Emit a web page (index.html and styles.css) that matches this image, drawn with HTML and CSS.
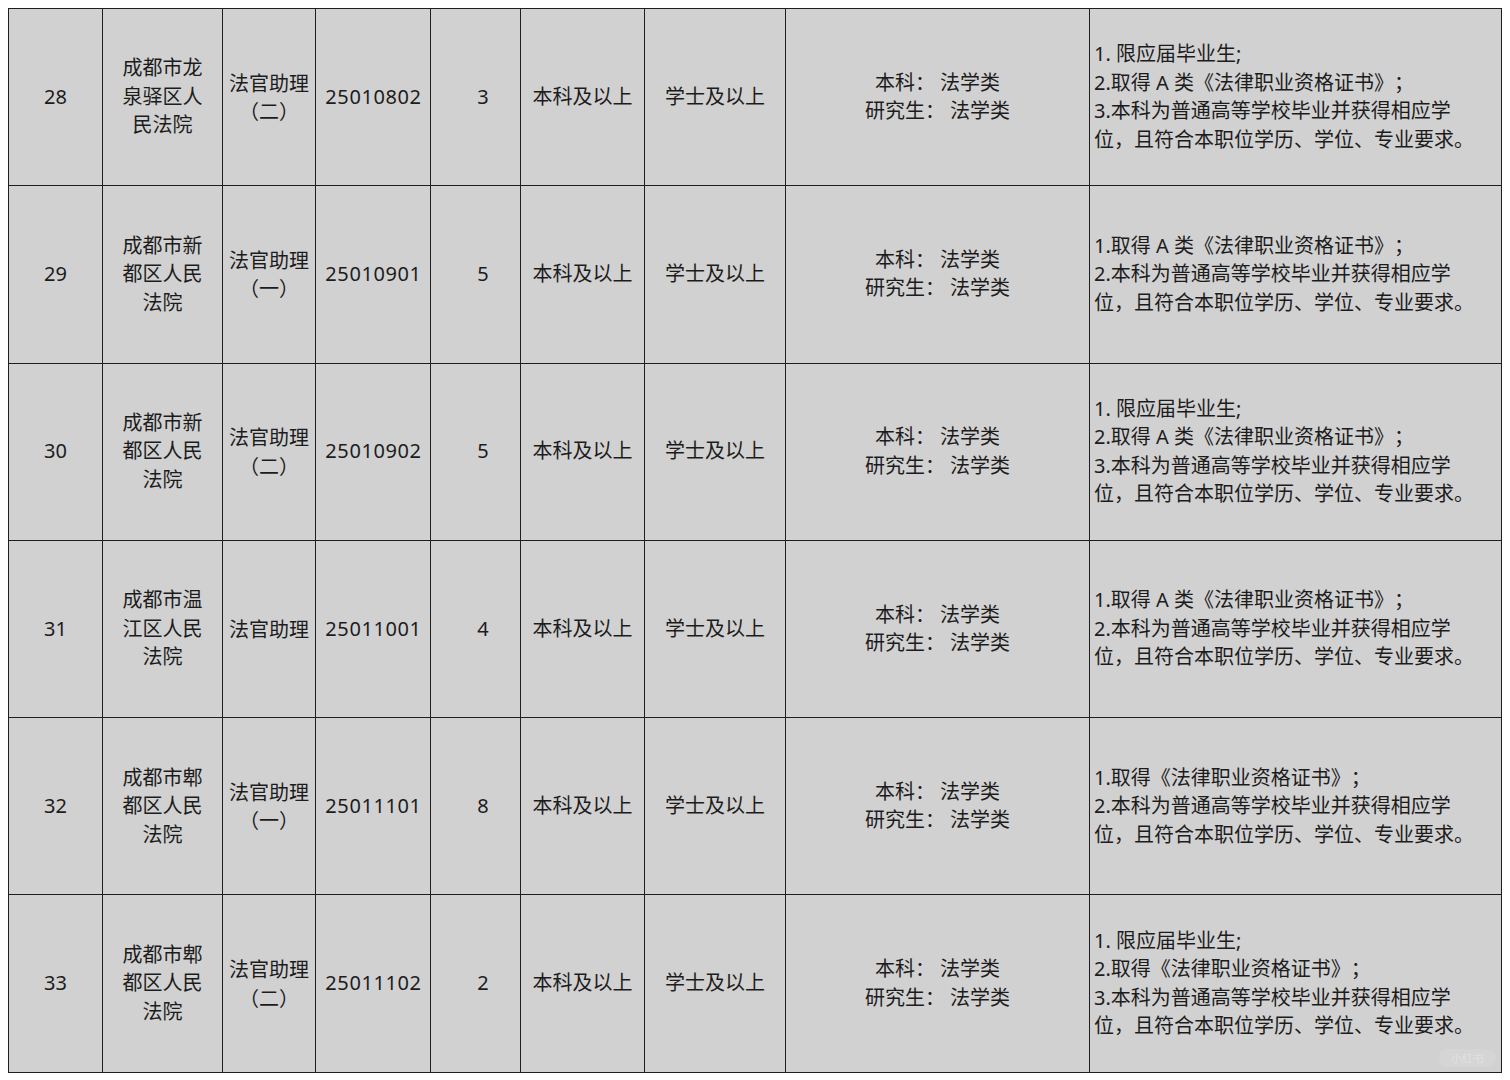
FILE: index.html
```html
<!DOCTYPE html>
<html lang="zh-CN">
<head>
<meta charset="utf-8">
<title>法官助理职位表</title>
<link rel="stylesheet" href="styles.css">
</head>
<body>
<div class="sheet">
<table class="grid">
  <colgroup>
    <col class="c-no"><col class="c-org"><col class="c-pos"><col class="c-code"><col class="c-num"><col class="c-edu"><col class="c-deg"><col class="c-major"><col class="c-req">
  </colgroup>
  <tbody>
    <tr>
      <td>28</td>
      <td>成都市龙<br>泉驿区人<br>民法院</td>
      <td class="pos">法官助理<br>（二）</td>
      <td class="code">25010802</td>
      <td class="num">3</td>
      <td>本科及以上</td>
      <td>学士及以上</td>
      <td>本科： 法学类<br>研究生： 法学类</td>
      <td class="req">1. 限应届毕业生;<br>2.取得 A 类《法律职业资格证书》；<br>3.本科为普通高等学校毕业并获得相应学<br>位，且符合本职位学历、学位、专业要求。</td>
    </tr>
    <tr>
      <td>29</td>
      <td>成都市新<br>都区人民<br>法院</td>
      <td class="pos">法官助理<br>（一）</td>
      <td class="code">25010901</td>
      <td class="num">5</td>
      <td>本科及以上</td>
      <td>学士及以上</td>
      <td>本科： 法学类<br>研究生： 法学类</td>
      <td class="req">1.取得 A 类《法律职业资格证书》；<br>2.本科为普通高等学校毕业并获得相应学<br>位，且符合本职位学历、学位、专业要求。</td>
    </tr>
    <tr>
      <td>30</td>
      <td>成都市新<br>都区人民<br>法院</td>
      <td class="pos">法官助理<br>（二）</td>
      <td class="code">25010902</td>
      <td class="num">5</td>
      <td>本科及以上</td>
      <td>学士及以上</td>
      <td>本科： 法学类<br>研究生： 法学类</td>
      <td class="req">1. 限应届毕业生;<br>2.取得 A 类《法律职业资格证书》；<br>3.本科为普通高等学校毕业并获得相应学<br>位，且符合本职位学历、学位、专业要求。</td>
    </tr>
    <tr>
      <td>31</td>
      <td>成都市温<br>江区人民<br>法院</td>
      <td class="pos">法官助理</td>
      <td class="code">25011001</td>
      <td class="num">4</td>
      <td>本科及以上</td>
      <td>学士及以上</td>
      <td>本科： 法学类<br>研究生： 法学类</td>
      <td class="req">1.取得 A 类《法律职业资格证书》；<br>2.本科为普通高等学校毕业并获得相应学<br>位，且符合本职位学历、学位、专业要求。</td>
    </tr>
    <tr>
      <td>32</td>
      <td>成都市郫<br>都区人民<br>法院</td>
      <td class="pos">法官助理<br>（一）</td>
      <td class="code">25011101</td>
      <td class="num">8</td>
      <td>本科及以上</td>
      <td>学士及以上</td>
      <td>本科： 法学类<br>研究生： 法学类</td>
      <td class="req">1.取得《法律职业资格证书》；<br>2.本科为普通高等学校毕业并获得相应学<br>位，且符合本职位学历、学位、专业要求。</td>
    </tr>
    <tr>
      <td>33</td>
      <td>成都市郫<br>都区人民<br>法院</td>
      <td class="pos">法官助理<br>（二）</td>
      <td class="code">25011102</td>
      <td class="num">2</td>
      <td>本科及以上</td>
      <td>学士及以上</td>
      <td>本科： 法学类<br>研究生： 法学类</td>
      <td class="req">1. 限应届毕业生;<br>2.取得《法律职业资格证书》；<br>3.本科为普通高等学校毕业并获得相应学<br>位，且符合本职位学历、学位、专业要求。</td>
    </tr>
  </tbody>
</table>
<span class="mark">小红书</span>
</div>
</body>
</html>
```

FILE: styles.css
```css
html, body {
  margin: 0;
  padding: 0;
  background: #ffffff;
}

body {
  padding: 8px 0 0 8px;
  font-family: "Noto Sans", "Noto Sans CJK SC", sans-serif;
  color: #1c1c1c;
  text-spacing-trim: space-all;
}

.sheet {
  position: relative;
  width: 1494px;
}

.grid {
  border-collapse: collapse;
  table-layout: fixed;
  width: 1494px;
  background: #d2d1d2;
}

.c-no { width: 94px; }
.c-org { width: 120px; }
.c-pos { width: 93px; }
.c-code { width: 115px; }
.c-num { width: 90px; }
.c-edu { width: 124px; }
.c-deg { width: 141px; }
.c-major { width: 304px; }
.c-req { width: 412px; }

.grid td {
  border: 1.5px solid #1e1e1e;
  height: 176.3px;
  padding: 0;
  text-align: center;
  vertical-align: middle;
  font-size: 20px;
  line-height: 28.5px;
  white-space: nowrap;
  text-spacing-trim: space-all;
}

.grid td.pos {
  font-family: "Noto Sans CJK SC", "Noto Sans", sans-serif;
}

.grid td.code {
  letter-spacing: 0.6px;
  padding-left: 1px;
}

.grid td.num {
  padding-left: 15px;
}

.grid td.req {
  text-align: left;
  padding-left: 4px;
}

.mark {
  position: absolute;
  right: 6px;
  bottom: 6px;
  padding: 1px 12px;
  border-radius: 12px;
  font-size: 11px;
  color: rgba(255, 255, 255, 0.3);
  background: rgba(255, 255, 255, 0.1);
}
```
